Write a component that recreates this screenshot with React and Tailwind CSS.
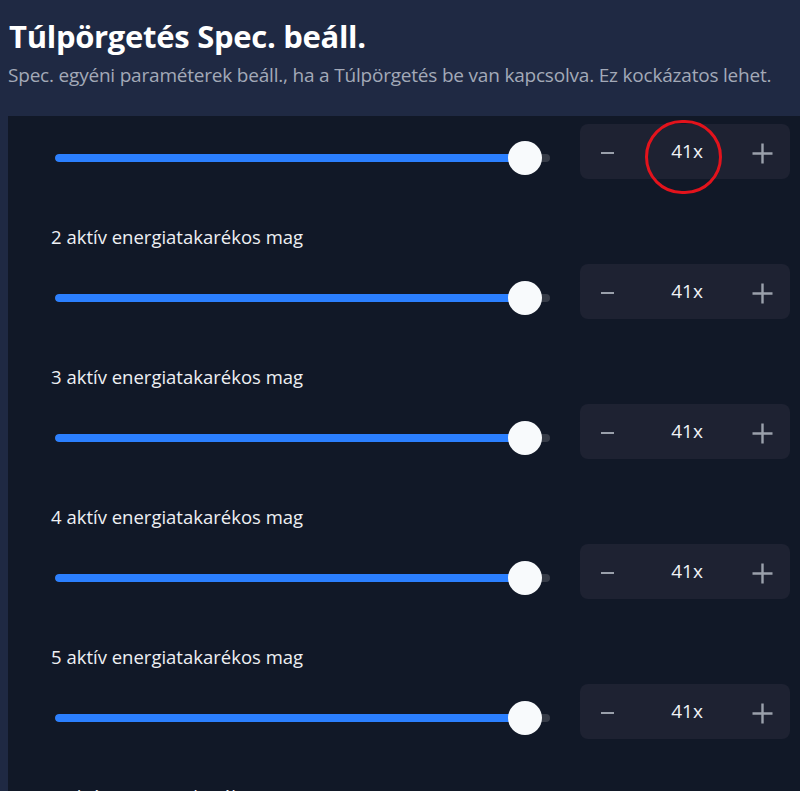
import React from "react";

const font = { fontFamily: '"Open Sans", "Noto Sans", "Liberation Sans", sans-serif' };

function Stepper({ value }) {
  return (
    <div className="grid grid-cols-[1fr_auto_1fr] items-center w-[210px] h-[55px] rounded-lg bg-[#1e2232] pl-[21px] pr-[17px] shrink-0">
      <button className="justify-self-start flex items-center h-[24px] mt-[3px]">
        <span className="block w-[13px] h-[2px] bg-[#9aa0ab]" />
      </button>
      <span className="text-[19px] text-[#f1f3f6] leading-none">{value}</span>
      <button className="justify-self-end flex items-center justify-center w-[21px] h-[21px] mt-[3px]">
        <svg width="21" height="21" viewBox="0 0 21 21">
          <path d="M10.5 0.5v20M0.5 10.5h20" stroke="#9aa0ab" strokeWidth="2.4" />
        </svg>
      </button>
    </div>
  );
}

function Slider({ pct }) {
  return (
    <div className="relative flex items-center w-[495px] h-[34px] mt-[17px] shrink-0">
      <div className="w-full h-[8px] rounded-full bg-[#363b47] overflow-hidden">
        <div className="h-full rounded-full bg-[#2b7fff]" style={{ width: `${pct}%` }} />
      </div>
      <div
        className="absolute top-0 w-[34px] h-[34px] rounded-full bg-[#f8fafc]"
        style={{ left: `calc(${pct}% - 17px)` }}
      />
    </div>
  );
}

function Row({ label, first }) {
  return (
    <div className={first ? "pt-[8px]" : "pt-[46px]"}>
      {label && (
        <div className="pl-[43px] h-[24px] mb-[15px] flex items-center text-[18.5px] text-[#eef0f4] whitespace-nowrap">
          {label}
        </div>
      )}
      <div className="flex items-start pl-[47px] gap-[30px]">
        <Slider pct={95} />
        <Stepper value="41x" />
      </div>
    </div>
  );
}

export default function App() {
  return (
    <div className="h-[791px] overflow-hidden bg-[#1f2943] flex flex-col" style={font}>
      <div className="px-[9px] pt-[15px] pb-[28px]">
        <h1 className="text-[31px] font-bold text-white leading-[42px] tracking-[-0.3px]">
          Túlpörgetés Spec. beáll.
        </h1>
        <p className="text-[19px] text-[#a3a9b8] leading-[26px] mt-[5px] -ml-[1px] tracking-[-0.2px] whitespace-nowrap">
          Spec. egyéni paraméterek beáll., ha a Túlpörgetés be van kapcsolva. Ez kockázatos lehet.
        </p>
      </div>
      <div className="relative ml-[8px] flex-1 bg-[#111827] overflow-hidden">
        <Row first />
        <Row label="2 aktív energiatakarékos mag" />
        <Row label="3 aktív energiatakarékos mag" />
        <Row label="4 aktív energiatakarékos mag" />
        <Row label="5 aktív energiatakarékos mag" />
        <Row label="6 aktív energiatakarékos mag" />
        <div className="absolute left-[637px] top-[4px] w-[77px] h-[74px] rounded-full border-[3px] border-[#e3131c]" />
      </div>
    </div>
  );
}
